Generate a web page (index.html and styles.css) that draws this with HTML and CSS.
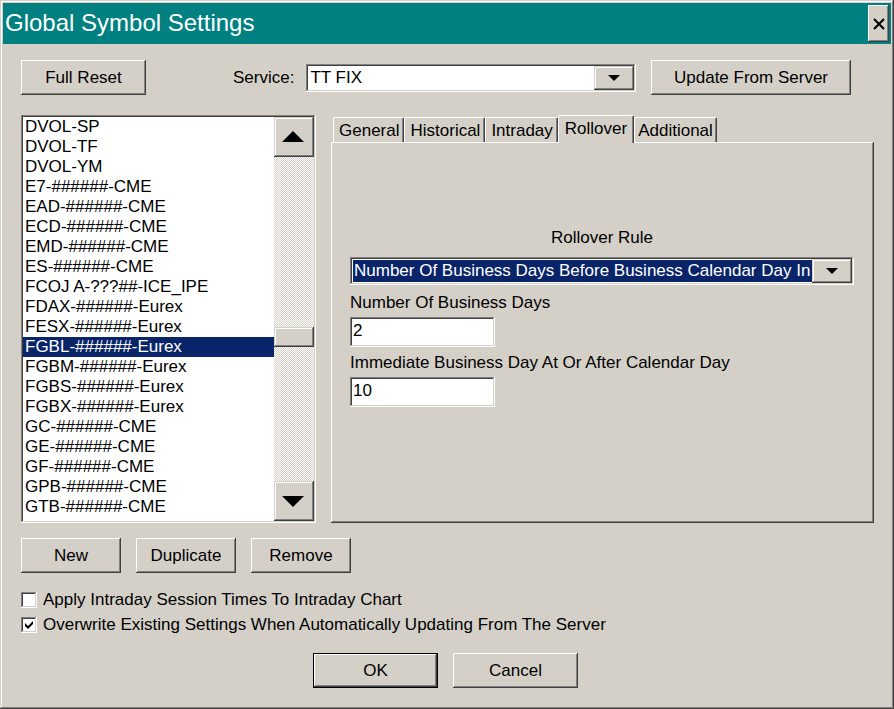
FILE: index.html
```html
<!DOCTYPE html>
<html lang="en">
<head>
<meta charset="utf-8">
<title>Global Symbol Settings</title>
<link rel="stylesheet" href="styles.css">
</head>
<body>
<main class="window">
  <header class="titlebar">
    <h1>Global Symbol Settings</h1>
    <button class="btn close" type="button" aria-label="Close">
      <svg width="12" height="12" viewBox="0 0 12 12" aria-hidden="true"><path d="M1 1l10 10M11 1L1 11" stroke="#000" stroke-width="2" fill="none"/></svg>
    </button>
  </header>
  <form class="content">
    <div class="toolbar">
      <button class="btn btn-wide" type="button">Full Reset</button>
      <div class="service">
        <label for="service">Service:</label>
        <div class="combo sunken">
          <select id="service"><option>TT FIX</option></select>
          <span class="combo-arrow raised"><svg width="12" height="6" viewBox="0 0 12 6" aria-hidden="true"><path d="M0 0h12L6 6z"/></svg></span>
        </div>
      </div>
      <button class="btn btn-update" type="button">Update From Server</button>
    </div>

    <div class="panes">
      <div class="listbox sunken">
        <select class="symbols" size="20" aria-label="Symbols">
          <option>DVOL-SP</option>
          <option>DVOL-TF</option>
          <option>DVOL-YM</option>
          <option>E7-######-CME</option>
          <option>EAD-######-CME</option>
          <option>ECD-######-CME</option>
          <option>EMD-######-CME</option>
          <option>ES-######-CME</option>
          <option>FCOJ A-???##-ICE_IPE</option>
          <option>FDAX-######-Eurex</option>
          <option>FESX-######-Eurex</option>
          <option selected>FGBL-######-Eurex</option>
          <option>FGBM-######-Eurex</option>
          <option>FGBS-######-Eurex</option>
          <option>FGBX-######-Eurex</option>
          <option>GC-######-CME</option>
          <option>GE-######-CME</option>
          <option>GF-######-CME</option>
          <option>GPB-######-CME</option>
          <option>GTB-######-CME</option>
        </select>
        <div class="scrollbar">
          <button class="raised scroll-btn" type="button" aria-label="Scroll up"><svg width="22" height="11" viewBox="0 0 22 11" aria-hidden="true"><path d="M0 11h22L11 0z"/></svg></button>
          <div class="track-before"></div>
          <div class="raised thumb"></div>
          <div class="track-after"></div>
          <button class="raised scroll-btn" type="button" aria-label="Scroll down"><svg width="22" height="11" viewBox="0 0 22 11" aria-hidden="true"><path d="M0 0h22L11 11z"/></svg></button>
        </div>
      </div>

      <section class="tabs">
        <div class="tablist" role="tablist">
          <button class="tab" type="button" role="tab">General</button>
          <button class="tab" type="button" role="tab">Historical</button>
          <button class="tab" type="button" role="tab">Intraday</button>
          <button class="tab selected" type="button" role="tab" aria-selected="true">Rollover</button>
          <button class="tab" type="button" role="tab">Additional</button>
        </div>
        <div class="tabpage" role="tabpanel">
          <label class="rule-label" for="rule">Rollover Rule</label>
          <div class="combo sunken active">
            <select id="rule"><option>Number Of Business Days Before Business Calendar Day In</option></select>
            <span class="combo-arrow raised"><svg width="12" height="6" viewBox="0 0 12 6" aria-hidden="true"><path d="M0 0h12L6 6z"/></svg></span>
          </div>
          <label class="field-label" for="days">Number Of Business Days</label>
          <input class="field sunken" id="days" type="text" value="2">
          <label class="field-label" for="calendar-day">Immediate Business Day At Or After Calendar Day</label>
          <input class="field sunken" id="calendar-day" type="text" value="10">
        </div>
      </section>
    </div>

    <div class="actions">
      <button class="btn" type="button">New</button>
      <button class="btn" type="button">Duplicate</button>
      <button class="btn" type="button">Remove</button>
    </div>

    <div class="checks">
      <label class="check"><input type="checkbox">Apply Intraday Session Times To Intraday Chart</label>
      <label class="check"><input type="checkbox" checked>Overwrite Existing Settings When Automatically Updating From The Server</label>
    </div>

    <div class="dialog-buttons">
      <button class="btn btn-wide default" type="button">OK</button>
      <button class="btn btn-wide" type="button">Cancel</button>
    </div>
  </form>
</main>
</body>
</html>
```
FILE: styles.css
```css
:root {
  --face: #d4d0c8;
  --shadow: #808080;
  --dark: #404040;
  --navy: #0a246a;
}

* { box-sizing: border-box; }

body {
  margin: 0;
  background: var(--face);
  color: #000;
  font: 17px/20px "Liberation Sans", Arial, sans-serif;
}

button, select, input { font: inherit; color: inherit; }
svg { display: block; }

.window {
  min-height: 100vh;
  padding: 3px;
  box-shadow: inset -1px -1px var(--dark), inset 1px 1px var(--face),
    inset -2px -2px var(--shadow), inset 2px 2px #fff;
}

.titlebar {
  display: flex;
  align-items: center;
  justify-content: space-between;
  height: 41px;
  padding: 0 2px;
  background: #008080;
}

.titlebar h1 {
  margin: 0;
  padding-bottom: 2px;
  color: #fff;
  font-size: 24px;
  font-weight: 400;
  line-height: 28px;
}

.btn {
  display: flex;
  align-items: center;
  justify-content: center;
  width: 100px;
  height: 35px;
  padding: 0;
  border: 0;
  background: var(--face);
  box-shadow: inset -1px -1px var(--dark), inset 1px 1px #fff,
    inset -2px -2px var(--shadow);
}

.btn-wide { width: 125px; }
.btn-update { width: 200px; }
.btn.close { width: 21px; height: 37px; }

.btn.default {
  border: 1px solid #000;
}

.raised {
  border: 0;
  background: var(--face);
  box-shadow: inset -1px -1px var(--dark), inset 1px 1px var(--face),
    inset -2px -2px var(--shadow), inset 2px 2px #fff;
}

.sunken {
  border: 0;
  padding: 2px;
  background: #fff;
  box-shadow: inset -1px -1px #fff, inset 1px 1px var(--shadow),
    inset -2px -2px var(--face), inset 2px 2px var(--dark);
}

.content { padding: 16px 17px 18px 18px; }

.toolbar {
  display: flex;
  align-items: center;
  gap: 15px;
  padding-right: 23px;
}

.service {
  display: flex;
  flex: 1;
  align-items: center;
  gap: 12px;
  padding-left: 72px;
}

.combo {
  display: grid;
  flex: 1;
  grid-template-columns: 1fr 40px;
  height: 28px;
}

.combo select {
  grid-area: 1 / 1 / 2 / 3;
  min-width: 0;
  margin: 0;
  padding: 0 40px 0 2px;
  border: 0;
  border-radius: 0;
  outline: 0;
  background: transparent;
  appearance: none;
}

.combo-arrow {
  display: grid;
  grid-area: 1 / 2 / 2 / 3;
  place-items: center;
  pointer-events: none;
}

.combo.active select {
  padding-left: 1px;
  border: solid #fff;
  border-width: 1px 0 1px 1px;
  background: var(--navy);
  color: #fff;
}

.panes {
  display: grid;
  grid-template-columns: 295px 1fr;
  gap: 15px;
  margin-top: 20px;
}

.listbox {
  display: flex;
  height: 408px;
}

.symbols {
  flex: 1;
  min-width: 0;
  height: 400px;
  padding: 0;
  border: 0;
  border-radius: 0;
  outline: 0;
  overflow: hidden;
  background: #fff;
}

.symbols option {
  height: 20px;
  min-height: 20px;
  padding: 0 2px;
  line-height: 22px;
}

.symbols option:checked {
  background: linear-gradient(var(--navy), var(--navy));
  -webkit-text-fill-color: #fff;
}

.scrollbar {
  display: flex;
  flex-direction: column;
  width: 40px;
  background: repeating-conic-gradient(#fff 0 25%, var(--face) 0 50%) 0 0 / 2px 2px;
}

.scroll-btn {
  display: grid;
  place-items: center;
  height: 40px;
  padding: 0 3px 2px 0;
}

.scroll-btn:last-child { padding-bottom: 0; }

.thumb { height: 20px; }
.track-before { flex: 170; }
.track-after { flex: 134; }

.tabs {
  display: flex;
  flex-direction: column;
  min-width: 0;
}

.tablist {
  display: flex;
  align-items: flex-end;
  height: 27px;
  padding-left: 2px;
}

.tab {
  height: 25px;
  padding: 2px 4px 0 5px;
  border: 1px solid #fff;
  border-right-color: var(--dark);
  border-bottom: 0;
  border-radius: 2px 2px 0 0;
  background: var(--face);
  box-shadow: inset -1px 0 var(--shadow);
}

.tab.selected {
  z-index: 1;
  height: 28px;
  margin-bottom: -1px;
  padding: 0 6px 2px;
}

.tab.selected + .tab { padding: 2px 3px 0; }

.tabpage {
  display: flex;
  flex: 1;
  flex-direction: column;
  padding: 86px 20px 20px 19px;
  box-shadow: inset -1px -1px var(--dark), inset 1px 1px #fff,
    inset -2px -2px var(--shadow);
}

.tabpage .combo { flex: none; margin-top: 9px; }
.rule-label { text-align: center; }
.field-label { margin-top: 8px; }

.field {
  width: 145px;
  height: 30px;
  margin-top: 4px;
  padding: 2px 3px 4px;
  border-radius: 0;
  outline: 0;
}

.field + .field-label { margin-top: 6px; }

.actions {
  display: flex;
  gap: 15px;
  margin-top: 15px;
}

.checks {
  display: flex;
  flex-direction: column;
  gap: 5px;
  margin-top: 17px;
}

.check {
  display: flex;
  align-items: center;
  gap: 6px;
}

.check input {
  width: 16px;
  height: 16px;
  margin: 0;
  appearance: none;
  background: #fff;
  box-shadow: inset -1px -1px #fff, inset 1px 1px var(--shadow),
    inset -2px -2px var(--face), inset 2px 2px var(--dark);
}

.check input:checked {
  background: #fff url("data:image/svg+xml,%3Csvg xmlns='http://www.w3.org/2000/svg' width='16' height='16'%3E%3Cpath d='M4 6l3 3 5-5v3l-5 5-3-3z'/%3E%3C/svg%3E");
}

.dialog-buttons {
  display: flex;
  justify-content: center;
  gap: 15px;
  margin-top: 18px;
  padding-right: 4px;
}
```
